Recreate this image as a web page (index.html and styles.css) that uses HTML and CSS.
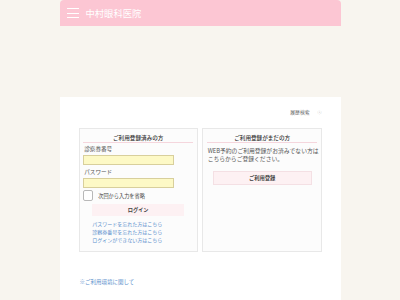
FILE: index.html
```html
<!DOCTYPE html>
<html lang="ja">
<head>
<meta charset="utf-8">
<link rel="stylesheet" href="styles.css">
</head>
<body>
<div class="page">
  <header class="header">
    <span class="burger"><i></i><i></i><i></i></span>
    <span class="site">中村眼科医院</span>
  </header>
  <main class="panel">
    <div class="tools"><span>履歴検索</span><span class="info">ⓘ</span></div>
    <div class="boxes">
      <section class="box">
        <h2 class="box-title">ご利用登録済みの方</h2>
        <label class="lbl">診察券番号</label>
        <div class="input"></div>
        <label class="lbl lbl2">パスワード</label>
        <div class="input"></div>
        <div class="check"><span class="cb"></span><span>次回から入力を省略</span></div>
        <div class="btn login">ログイン</div>
        <ul class="links">
          <li>パスワードを忘れた方はこちら</li>
          <li>診察券番号を忘れた方はこちら</li>
          <li>ログインができない方はこちら</li>
        </ul>
      </section>
      <section class="box">
        <h2 class="box-title">ご利用登録がまだの方</h2>
        <p class="desc">WEB予約のご利用登録がお済みでない方は<br>こちらからご登録ください。</p>
        <div class="btn reg">ご利用登録</div>
      </section>
    </div>
    <p class="env">※ご利用環境に関して</p>
  </main>
</div>
</body>
</html>
```
FILE: styles.css
```css
* { box-sizing: border-box; }
html, body { margin: 0; padding: 0; }
body {
  background: #f8f5ef;
  font-family: "Noto Sans CJK JP", "Noto Sans", sans-serif;
  color: #444;
  height: 300px;
  overflow: hidden;
}
.page { width: 281px; margin: 0 auto; }
.header {
  height: 26px;
  background: #fcc6d3;
  border-radius: 4px 4px 0 0;
  display: flex;
  align-items: center;
  padding-left: 7px;
  gap: 7px;
}
.burger { display: flex; flex-direction: column; gap: 3.4px; width: 12px; }
.burger i { display: block; height: 1px; background: #fff; }
.site { color: #fff; font-size: 9.3px; line-height: 12px; }
.panel {
  margin-top: 71px;
  background: #fff;
  padding: 11px 19px 8px 19px;
  height: 203px;
}
.tools {
  display: flex; justify-content: flex-end; align-items: center; gap: 8px;
  font-size: 4.8px; line-height: 8px; color: #666;
}
.info { font-size: 4px; color: #999; }
.boxes {
  margin-top: 11.5px;
  display: grid;
  grid-template-columns: 119.4px 119.4px;
  gap: 4.6px;
}
.box {
  border: 1px solid #e8e8e8;
  background: #fcfcfc;
  padding: 5px 3.7px 7px;
}
.box-title {
  margin: 0;
  font-size: 5.6px;
  line-height: 8px;
  font-weight: 500;
  text-align: center;
  color: #333;
  border-bottom: 1.5px solid #f5d6dd;
  padding-bottom: 0;
}
.lbl { display: block; font-size: 5.6px; line-height: 7px; margin-top: 3.5px; margin-left: 1px; color: #555; }
.lbl2 { margin-top: 4px; }
.input {
  width: 91px; height: 10px;
  margin-top: 2px;
  background: #fdf9c6;
  border: 1px solid #d8cf9c;
}
.lbl2 + .input { margin-top: 1.7px; }
.check { display: flex; align-items: center; gap: 5px; margin-top: 2.5px; font-size: 5.2px; color: #444; }
.cb {
  width: 10px; height: 11px;
  background: #fff;
  border: 1px solid #b8b8b8;
  border-radius: 2px;
}
.btn {
  margin-left: auto; margin-right: auto;
  background: #fdf1f3;
  text-align: center;
  font-weight: 700;
  color: #444;
}
.login { width: 92px; height: 11.4px; line-height: 11.4px; font-size: 5.2px; margin-top: 3px; }
.links {
  list-style: none; margin: 4px 0 0 0; padding: 0 0 0 9px;
  font-size: 5px; line-height: 8.3px; color: #5b8fcc;
}
.desc {
  margin: 4.2px -3px 0 0.5px;
  font-size: 5.8px; line-height: 8.3px; color: #555;
  white-space: nowrap;
}
.reg {
  width: 99px; height: 14px; line-height: 12px; font-size: 5.3px;
  margin-top: 7.8px;
  border: 1px solid #f4e0e4;
}
.env { margin: 25.5px 0 0 1px; font-size: 5.5px; line-height: 8px; color: #5b8fcc; }
```
